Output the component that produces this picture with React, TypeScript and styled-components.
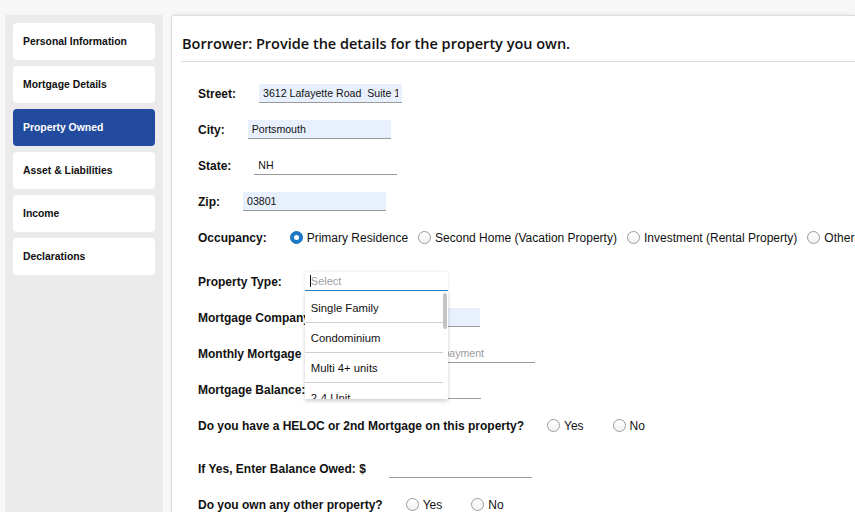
import React from "react";
import styled, { createGlobalStyle } from "styled-components";

const GlobalStyle = createGlobalStyle`
  html, body {
    margin: 0;
    padding: 0;
    background: #f7f7f7;
  }
  body {
    font-family: "Liberation Sans", Arial, sans-serif;
    color: #111;
  }
  #root {
    height: 100vh;
    overflow: hidden;
  }
`;

const Page = styled.div`
  display: flex;
  gap: 8px;
  height: 100%;
  padding: 15px 0 0 5px;
  box-sizing: border-box;
`;

const Sidebar = styled.nav`
  width: 158px;
  flex-shrink: 0;
  display: flex;
  flex-direction: column;
  gap: 6px;
  padding: 8px;
  box-sizing: border-box;
  background: #ebebeb;
`;

const NavItem = styled.div<{ $active?: boolean }>`
  height: 37px;
  display: flex;
  align-items: center;
  padding-left: 10px;
  border-radius: 4px;
  font-size: 10.4px;
  font-weight: bold;
  background: ${(p) => (p.$active ? "#224b9f" : "#fff")};
  color: ${(p) => (p.$active ? "#fff" : "#111")};
`;

const Main = styled.main`
  flex: 1;
  min-width: 0;
  overflow: hidden;
  background: #fff;
  border-top: 1px solid #dedede;
  border-left: 1px solid #dcdcdc;
  border-top-left-radius: 3px;
  box-shadow: 0 -1px 3px rgba(0, 0, 0, 0.06);
`;

const Heading = styled.h1`
  margin: 19px 0 0 9px;
  padding: 0 0 8px 1px;
  border-bottom: 1px solid #dadada;
  font-family: "Open Sans", sans-serif;
  font-size: 14.5px;
  font-weight: 600;
  line-height: 18px;
  color: #111;
  white-space: nowrap;
`;

const Form = styled.div`
  display: flex;
  flex-direction: column;
  gap: 17px;
  padding: 22px 0 0 26px;
`;

const Row = styled.div<{ $extraTop?: number }>`
  display: flex;
  align-items: center;
  gap: 23px;
  height: 19px;
  margin-top: ${(p) => p.$extraTop || 0}px;
  white-space: nowrap;
`;

const Label = styled.span`
  font-size: 12px;
  font-weight: bold;
`;

const TextInput = styled.input<{ $filled?: boolean }>`
  width: 143px;
  height: 19px;
  box-sizing: border-box;
  padding: 0 4px;
  border: none;
  border-bottom: 1px solid #9a9a9a;
  background: ${(p) => (p.$filled ? "#e8f0fe" : "transparent")};
  font-family: "Liberation Sans", Arial, sans-serif;
  font-size: 10.6px;
  color: #111;
  outline: none;
  &::placeholder {
    color: #9a9a9a;
  }
`;

const RadioGroup = styled.div<{ $gap: number }>`
  display: flex;
  align-items: center;
  gap: ${(p) => p.$gap}px;
`;

const RadioOption = styled.label`
  display: flex;
  align-items: center;
  gap: 4px;
  font-size: 12px;
  color: #111;
`;

const RadioDot = styled.span<{ $checked?: boolean }>`
  position: relative;
  width: 13px;
  height: 13px;
  box-sizing: border-box;
  border-radius: 50%;
  border: 1px solid ${(p) => (p.$checked ? "#1a6fb8" : "#9b9b9b")};
  background: ${(p) =>
    p.$checked ? "#1a7ac6" : "linear-gradient(#ffffff, #f1f1f1)"};
  &::after {
    content: "";
    display: ${(p) => (p.$checked ? "block" : "none")};
    position: absolute;
    left: 3px;
    top: 3px;
    width: 5px;
    height: 5px;
    border-radius: 50%;
    background: #fff;
  }
`;

const SelectBox = styled.div`
  position: relative;
  width: 143px;
  height: 19px;
  box-shadow: 0 0 3px rgba(0, 0, 0, 0.12);
  z-index: 2;
`;

const SelectField = styled.div`
  height: 19px;
  box-sizing: border-box;
  display: flex;
  align-items: center;
  padding-left: 5px;
  border-bottom: 1px solid #2a7fc0;
  font-size: 11px;
  color: #a0a0a0;
`;

const Caret = styled.span`
  width: 1px;
  height: 12px;
  background: #111;
`;

const Menu = styled.div`
  position: absolute;
  top: 19px;
  left: 0;
  width: 143px;
  height: 108px;
  box-sizing: border-box;
  padding: 2px 5px 0 0;
  overflow: hidden;
  background: #fff;
  box-shadow: 0 2px 4px rgba(0, 0, 0, 0.2);
`;

const MenuItem = styled.div`
  height: 29px;
  display: flex;
  align-items: center;
  padding-left: 6px;
  border-bottom: 1px solid #cfcfcf;
  font-size: 11.3px;
  color: #111;
`;

const Thumb = styled.div`
  position: absolute;
  right: 1px;
  top: 2px;
  width: 4px;
  height: 36px;
  border-radius: 2px;
  background: #c3c3c3;
`;

const navItems = [
  "Personal Information",
  "Mortgage Details",
  "Property Owned",
  "Asset & Liabilities",
  "Income",
  "Declarations",
];

const occupancy = [
  "Primary Residence",
  "Second Home (Vacation Property)",
  "Investment (Rental Property)",
  "Other",
];

const propertyTypes = [
  "Single Family",
  "Condominium",
  "Multi 4+ units",
  "2-4 Unit",
  "Townhouse",
];

function YesNo() {
  return (
    <RadioGroup $gap={29}>
      <RadioOption>
        <RadioDot />
        Yes
      </RadioOption>
      <RadioOption>
        <RadioDot />
        No
      </RadioOption>
    </RadioGroup>
  );
}

export default function App() {
  return (
    <>
      <GlobalStyle />
      <Page>
        <Sidebar>
          {navItems.map((item) => (
            <NavItem key={item} $active={item === "Property Owned"}>
              {item}
            </NavItem>
          ))}
        </Sidebar>
        <Main>
          <Heading>Borrower: Provide the details for the property you own.</Heading>
          <Form>
            <Row>
              <Label>Street:</Label>
              <TextInput $filled readOnly value="3612 Lafayette Road  Suite 1" />
            </Row>
            <Row>
              <Label>City:</Label>
              <TextInput $filled readOnly value="Portsmouth" />
            </Row>
            <Row>
              <Label>State:</Label>
              <TextInput readOnly value="NH" />
            </Row>
            <Row>
              <Label>Zip:</Label>
              <TextInput $filled readOnly value="03801" />
            </Row>
            <Row>
              <Label>Occupancy:</Label>
              <RadioGroup $gap={10}>
                {occupancy.map((o, i) => (
                  <RadioOption key={o}>
                    <RadioDot $checked={i === 0} />
                    {o}
                  </RadioOption>
                ))}
              </RadioGroup>
            </Row>
            <Row $extraTop={8}>
              <Label>Property Type:</Label>
              <SelectBox>
                <SelectField>
                  <Caret />
                  Select
                </SelectField>
                <Menu>
                  {propertyTypes.map((t) => (
                    <MenuItem key={t}>{t}</MenuItem>
                  ))}
                  <Thumb />
                </Menu>
              </SelectBox>
            </Row>
            <Row>
              <Label>Mortgage Company:</Label>
              <TextInput $filled readOnly value="" />
            </Row>
            <Row>
              <Label>Monthly Mortgage Payment: $</Label>
              <TextInput readOnly placeholder="Mortgage payment" />
            </Row>
            <Row>
              <Label>Mortgage Balance: $</Label>
              <TextInput readOnly value="" />
            </Row>
            <Row>
              <Label>Do you have a HELOC or 2nd Mortgage on this property?</Label>
              <YesNo />
            </Row>
            <Row $extraTop={7}>
              <Label>If Yes, Enter Balance Owed: $</Label>
              <TextInput readOnly value="" />
            </Row>
            <Row>
              <Label>Do you own any other property?</Label>
              <YesNo />
            </Row>
          </Form>
        </Main>
      </Page>
    </>
  );
}
